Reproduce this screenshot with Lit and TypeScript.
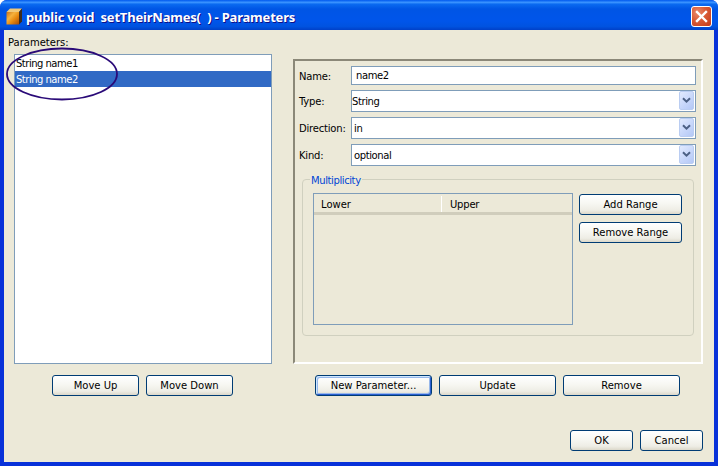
import { LitElement, html, css } from "lit";
import { customElement } from "lit/decorators.js";

const chevron = html`<svg class="chev" width="9" height="7" viewBox="0 0 9 7"><path d="M1 1.2 L4.5 4.7 L8 1.2" fill="none" stroke="#4d6185" stroke-width="2"/></svg>`;

@customElement("app-root")
export class AppRoot extends LitElement {
  static styles = css`
    :host { display: block; width: 718px; height: 466px; overflow: hidden; background: #fff;
      font-family: "DejaVu Sans", "Liberation Sans", sans-serif; font-size: 10px; color: #000; }
    .window { width: 718px; height: 466px; display: flex; flex-direction: column; background: #0831d9; border-radius: 7px 7px 0 0; overflow: hidden; }
    .title { height: 30px; flex: none; display: flex; align-items: center; box-sizing: border-box; padding: 3px 6px 0 6px;
      background: linear-gradient(180deg, #0058ee 0%, #3a93ff 8%, #0a6af0 14%, #0055e5 30%, #0055ea 70%, #0053e0 88%, #0040c8 100%); }
    .icon { flex: none; margin-right: 4px; display: block; }
    .title-text { flex: 1; color: #fff; font-family: "Noto Sans", sans-serif; font-weight: 700; font-size: 13px; letter-spacing: -0.2px; white-space: pre; text-shadow: 1px 1px 0 #0f1089; }
    .close { flex: none; width: 21px; height: 21px; box-sizing: border-box; border: 1px solid #fff; border-radius: 3px; display: grid; place-items: center;
      background: radial-gradient(circle at 30% 30%, #e98a6c 0%, #d95a35 45%, #c23a1a 100%); }
    .frame { flex: 1; display: flex; flex-direction: column; margin: 0 4px 4px; background: #ece9d8; min-height: 0; }
    .columns { display: flex; }
    .left { width: 268px; flex: none; padding-left: 4px; box-sizing: border-box; }
    .list-label { height: 14px; line-height: 14px; margin-top: 6px; margin-bottom: 4px; white-space: pre; }
    .list { margin-left: 6px; width: 258px; height: 310px; box-sizing: border-box; border: 1px solid #7f9db9; background: #fff; }
    .item { height: 16px; line-height: 18px; padding-left: 1px; white-space: pre; letter-spacing: -0.5px; }
    .item.sel { background: #316ac5; color: #fff; }
    .btn-row { display: flex; gap: 7px; margin-top: 11px; }
    .left .btn-row { padding-left: 44px; }
    .right { margin-left: 21px; padding-top: 29px; }
    .panel { width: 410px; height: 305px; box-sizing: border-box; border: 2px solid; border-color: #8b8878 #fff #fff #8b8878; padding: 5px 5px 0 4px; }
    .rows { display: flex; flex-direction: column; gap: 5px; }
    .row { display: flex; align-items: center; }
    .row label { width: 52px; flex: none; white-space: pre; letter-spacing: -0.2px; padding-top: 1px; }
    .input { flex: 1; box-sizing: border-box; height: 19px; border: 1px solid #7f9db9; background: #fff; line-height: 17px; padding-left: 4px; white-space: pre; letter-spacing: -0.4px; }
    .select { flex: 1; box-sizing: border-box; height: 22px; border: 1px solid #7f9db9; background: #fff; line-height: 22px; padding: 0 1px 0 2px; display: flex; justify-content: space-between; white-space: pre; letter-spacing: -0.4px; }
    .select.flush { padding-left: 0; }
    .arrow { width: 15px; height: 19px; margin-top: 0; box-sizing: border-box; border: 1px solid #bacdf2; border-radius: 2px; display: grid; place-items: center;
      background: linear-gradient(135deg, #e1eafe 0%, #c5d5fa 60%, #b4c8f6 100%); }
    .chev { display: block; }
    fieldset { margin: 4px 2px 0 3px; padding: 5px 10px 9px 10px; border: 1px solid #d0d0bf; border-radius: 4px; min-width: 0; height: 166px; box-sizing: border-box; }
    legend { margin-left: -3px; padding: 4px 1px 0; color: #0046d5; line-height: 14px; white-space: pre; letter-spacing: -0.4px; }
    .inner { display: flex; gap: 6px; }
    .table { width: 260px; height: 132px; box-sizing: border-box; border: 1px solid #7f9db9; }
    .thead { display: flex; height: 21px; box-sizing: border-box; border-bottom: 3px solid #d0cdbc; }
    .th { white-space: pre; padding-left: 7px; box-sizing: border-box; height: 16px; margin-top: 2px; line-height: 18px; }
    .th.a { width: 128px; border-right: 1px solid #fff; }
    .th.b { padding-left: 8px; letter-spacing: -0.2px; }
    .side { display: flex; flex-direction: column; gap: 7px; padding-top: 1px; }
    button { font: inherit; color: #000; height: 21px; padding: 0; box-sizing: border-box; border: 1px solid #003c74; border-radius: 3px; white-space: pre;
      background: linear-gradient(180deg, #fff 0%, #f7f7f2 45%, #eeede5 80%, #dcd8ca 100%); }
    button.focus { box-shadow: inset 1px 1px 0 #cee7ff, inset -1px -1px 0 #2a5ed0, inset 2px 2px 0 #98b8ea, inset -2px -2px 0 #98b8ea; }
    .w87 { width: 87px; }
    .w103 { width: 103px; }
    .w117 { width: 117px; }
    .w63 { width: 63px; }
    .right .btn-row { padding-left: 22px; }
    .footer { margin-top: auto; display: flex; justify-content: flex-end; gap: 7px; padding: 0 11px 11px 0; }
    .ring { position: absolute; left: 6px; top: 47px; pointer-events: none; }
  `;

  render() {
    return html`
      <div class="window">
        <div class="title">
          <svg class="icon" width="16" height="17" viewBox="0 0 16 17">
            <defs>
              <linearGradient id="cubeFront" x1="0" y1="0" x2="1" y2="1">
                <stop offset="0" stop-color="#c9701a"/>
                <stop offset="0.35" stop-color="#f6b23c"/>
                <stop offset="0.6" stop-color="#e88a10"/>
                <stop offset="1" stop-color="#a84c06"/>
              </linearGradient>
            </defs>
            <path d="M0.5 4 L4 0.5 H16 L13 4 Z" fill="#f0c878"/>
            <path d="M0.5 4 H13 V16.5 H0.5 Z" fill="url(#cubeFront)"/>
            <path d="M13 4 L16 0.5 V13.5 L13 16.5 Z" fill="#3e2c1c"/>
          </svg>
          <span class="title-text">public void  setTheirNames(  ) - Parameters</span>
          <div class="close">
            <svg width="13" height="13" viewBox="0 0 13 13"><path d="M2 2 L11 11 M11 2 L2 11" stroke="#fff" stroke-width="2.4" stroke-linecap="square" fill="none"/></svg>
          </div>
        </div>
        <div class="frame">
          <div class="columns">
            <div class="left">
              <div class="list-label">Parameters:</div>
              <div class="list">
                <div class="item">String name1</div>
                <div class="item sel">String name2</div>
              </div>
              <div class="btn-row">
                <button class="w87">Move Up</button>
                <button class="w87">Move Down</button>
              </div>
            </div>
            <div class="right">
              <div class="panel">
                <div class="rows">
                  <div class="row"><label>Name:</label><div class="input">name2</div></div>
                  <div class="row"><label>Type:</label><div class="select flush">String<span class="arrow">${chevron}</span></div></div>
                  <div class="row"><label>Direction:</label><div class="select">in<span class="arrow">${chevron}</span></div></div>
                  <div class="row"><label>Kind:</label><div class="select">optional<span class="arrow">${chevron}</span></div></div>
                </div>
                <fieldset>
                  <legend>Multiplicity</legend>
                  <div class="inner">
                    <div class="table">
                      <div class="thead"><div class="th a">Lower</div><div class="th b">Upper</div></div>
                    </div>
                    <div class="side">
                      <button class="w103">Add Range</button>
                      <button class="w103">Remove Range</button>
                    </div>
                  </div>
                </fieldset>
              </div>
              <div class="btn-row">
                <button class="w117 focus">New Parameter...</button>
                <button class="w117">Update</button>
                <button class="w117">Remove</button>
              </div>
            </div>
          </div>
          <div class="footer">
            <button class="w63">OK</button>
            <button class="w63">Cancel</button>
          </div>
        </div>
      </div>
      <svg class="ring" width="116" height="56" viewBox="0 0 116 56">
        <ellipse cx="56" cy="27" rx="55" ry="25.5" fill="none" stroke="#2a0a78" stroke-width="1.8"/>
      </svg>
    `;
  }
}
